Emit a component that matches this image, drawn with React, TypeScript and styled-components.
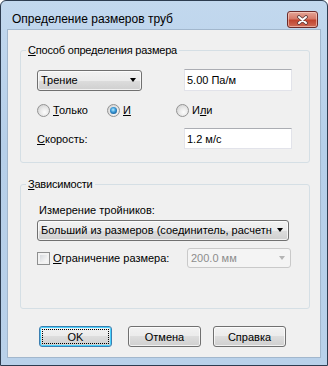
import React from 'react';
import styled, {createGlobalStyle} from 'styled-components';

const GlobalStyle = createGlobalStyle`
  html, body {
    margin: 0;
    padding: 0;
    background: #ffffff;
  }
  body {
    font-family: "Liberation Sans", Arial, sans-serif;
    font-size: 11px;
    color: #000;
  }
`;

const StyledWindow = styled.div`
  box-sizing: border-box;
  width: 328px;
  height: 366px;
  border: 1px solid #2d3c50;
  border-radius: 6px 6px 0 0;
  background: linear-gradient(#c2d8ee, #b6cfe9 40%, #b9d1ea);
  padding: 0 6px 7px;
  display: flex;
  flex-direction: column;
`;

const StyledTitleBar = styled.div`
  height: 28px;
  display: flex;
  align-items: flex-end;
  justify-content: space-between;
  padding: 0 3px 1px 5px;
  box-sizing: border-box;
`;

const StyledTitle = styled.span`
  font-family: "Liberation Sans", Arial, sans-serif;
  font-size: 12px;
  line-height: 18px;
  color: #000;
`;

const StyledClose = styled.div`
  box-sizing: border-box;
  width: 31px;
  height: 17px;
  border: 1px solid #6b2b2b;
  border-radius: 3px;
  background: linear-gradient(#e4a597 0%, #d67a69 45%, #c0442f 55%, #cf6b57 100%);
  box-shadow: inset 0 0 0 1px rgba(255, 220, 210, 0.55);
  display: flex;
  align-items: center;
  justify-content: center;
`;

const StyledClient = styled.div`
  flex: 1;
  background: #f0f0f0;
  border: 1px solid #a2b7cd;
  display: flex;
  flex-direction: column;
`;

const StyledGroup = styled.fieldset<{$top: number; $bottom: number}>`
  box-sizing: border-box;
  margin: ${p => p.$top}px 10px 0 12px;
  padding: 12px 17px ${p => p.$bottom}px 16px;
  border: 1px solid #d5dfe5;
  border-radius: 3px;
  min-width: 0;
`;

const StyledLegend = styled.legend`
  padding: 0 2px;
  margin-left: -11px;
  line-height: 14px;
  font-size: 11px;
  letter-spacing: -0.2px;
`;

const StyledKey = styled.span`
  text-decoration: underline;
  text-underline-offset: 1px;
`;

const StyledRow = styled.div<{$gap?: number; $height: number}>`
  display: flex;
  align-items: center;
  justify-content: space-between;
  height: ${p => p.$height}px;
  margin-top: ${p => p.$gap || 0}px;
`;

const StyledText = styled.span<{$disabled?: boolean}>`
  line-height: 14px;
  white-space: nowrap;
  color: ${p => (p.$disabled ? '#8d8d8d' : '#000')};
`;

const StyledLabelLine = styled.div`
  line-height: 14px;
  height: 14px;
  padding-left: 2px;
`;

const StyledField = styled.div<{$height: number}>`
  box-sizing: border-box;
  width: 108px;
  height: ${p => p.$height}px;
  background: #fff;
  border: 1px solid #e2e3ea;
  border-top-color: #abadb3;
  padding: 0 2px;
  display: flex;
  align-items: center;
`;

const StyledCombo = styled.div<{$width: number; $disabled?: boolean}>`
  box-sizing: border-box;
  width: ${p => p.$width}px;
  height: ${p => (p.$disabled ? 20 : 21)}px;
  border: 1px solid ${p => (p.$disabled ? '#c9c9c9' : '#707070')};
  border-radius: 3px;
  background: ${p => (p.$disabled
    ? '#f4f4f4'
    : 'linear-gradient(#f2f2f2 0%, #ebebeb 50%, #dddddd 50%, #cfcfcf 100%)')};
  box-shadow: ${p => (p.$disabled ? 'none' : 'inset 0 0 0 1px rgba(255,255,255,0.7)')};
  display: flex;
  align-items: center;
  justify-content: space-between;
  padding: 0 5px 0 3px;
  overflow: hidden;
  gap: 4px;
`;

const StyledArrow = styled.span<{$disabled?: boolean}>`
  flex: none;
  width: 0;
  height: 0;
  border-left: 3.5px solid transparent;
  border-right: 3.5px solid transparent;
  border-top: 4px solid ${p => (p.$disabled ? '#b4b4b4' : '#000')};
`;

const StyledRadioGroup = styled.div`
  display: flex;
  align-items: center;
  height: 16px;
  margin-top: 11px;
`;

const StyledRadio = styled.label<{$width?: number}>`
  display: flex;
  align-items: center;
  gap: 3px;
  width: ${p => (p.$width ? `${p.$width}px` : 'auto')};
`;

const StyledRadioMark = styled.span<{$checked?: boolean}>`
  box-sizing: border-box;
  width: 13px;
  height: 13px;
  border-radius: 50%;
  border: 1px solid #939393;
  background: radial-gradient(circle at 60% 65%, #fdfdfd 0%, #e8e8e8 45%, #c9c9c9 100%);
  display: flex;
  align-items: center;
  justify-content: center;
  &::after {
    content: '';
    display: ${p => (p.$checked ? 'block' : 'none')};
    width: 7px;
    height: 7px;
    border-radius: 50%;
    background: radial-gradient(circle at 45% 40%, #b6ecff 0%, #3d9bd8 40%, #125a95 80%, #0c3e6a 100%);
  }
`;

const StyledCheckRow = styled.div`
  display: flex;
  align-items: center;
  margin-top: 8px;
  height: 20px;
`;

const StyledCheck = styled.label`
  display: flex;
  align-items: center;
  gap: 3px;
  width: 150px;
`;

const StyledCheckMark = styled.span`
  box-sizing: border-box;
  width: 13px;
  height: 13px;
  border: 1px solid #8e8f8f;
  background: linear-gradient(135deg, #cbcfd5 0%, #f4f4f4 70%, #ffffff 100%);
  box-shadow: inset 0 0 0 2px #f2f2f2;
`;

const StyledButtonRow = styled.div`
  display: flex;
  margin-top: 17px;
  padding-left: 31px;
`;

const StyledButton = styled.button<{$default?: boolean; $offset?: number}>`
  box-sizing: border-box;
  position: relative;
  width: 73px;
  height: 21px;
  margin: 0 0 0 ${p => p.$offset || 0}px;
  padding: 0;
  border: 1px solid ${p => (p.$default ? '#3c7fb1' : '#707070')};
  border-radius: 3px;
  background: linear-gradient(#f2f2f2 0%, #ebebeb 50%, #dddddd 50%, #cfcfcf 100%);
  box-shadow: inset 0 0 0 1px ${p => (p.$default ? '#48d1fd' : 'rgba(255,255,255,0.7)')};
  font-family: "Liberation Sans", Arial, sans-serif;
  font-size: 11px;
  color: #000;
  &::after {
    content: '';
    display: ${p => (p.$default ? 'block' : 'none')};
    position: absolute;
    inset: 2px;
    border: 1px dotted #000;
  }
`;

const CloseGlyph = () => (
    <svg width="13" height="10" viewBox="0 0 13 10">
        <path d="M3 2 L10 8 M10 2 L3 8" stroke="#5c3a3a" strokeWidth="3.6" strokeLinecap="round"/>
        <path d="M3 2 L10 8 M10 2 L3 8" stroke="#ffffff" strokeWidth="2" strokeLinecap="round"/>
    </svg>
);

const App = () => {
    return (
        <>
            <GlobalStyle/>
            <StyledWindow>
                <StyledTitleBar>
                    <StyledTitle>Определение размеров труб</StyledTitle>
                    <StyledClose><CloseGlyph/></StyledClose>
                </StyledTitleBar>
                <StyledClient>
                    <StyledGroup $top={13} $bottom={13}>
                        <StyledLegend><StyledKey>С</StyledKey>пособ определения размера</StyledLegend>
                        <StyledRow $height={22}>
                            <StyledCombo $width={105}>
                                <StyledText>Трение</StyledText>
                                <StyledArrow/>
                            </StyledCombo>
                            <StyledField $height={22}>5.00 Па/м</StyledField>
                        </StyledRow>
                        <StyledRadioGroup>
                            <StyledRadio $width={70}>
                                <StyledRadioMark/>
                                <StyledText><StyledKey>Т</StyledKey>олько</StyledText>
                            </StyledRadio>
                            <StyledRadio $width={69}>
                                <StyledRadioMark $checked/>
                                <StyledText><StyledKey>И</StyledKey></StyledText>
                            </StyledRadio>
                            <StyledRadio>
                                <StyledRadioMark/>
                                <StyledText>И<StyledKey>л</StyledKey>и</StyledText>
                            </StyledRadio>
                        </StyledRadioGroup>
                        <StyledRow $height={21} $gap={10}>
                            <StyledText><StyledKey>С</StyledKey>корость:</StyledText>
                            <StyledField $height={21}>1.2 м/с</StyledField>
                        </StyledRow>
                    </StyledGroup>
                    <StyledGroup $top={14} $bottom={40}>
                        <StyledLegend><StyledKey>З</StyledKey>ависимости</StyledLegend>
                        <StyledLabelLine>Измерение тройников:</StyledLabelLine>
                        <StyledRow $height={20} $gap={3}>
                            <StyledCombo $width={252}>
                                <StyledText>Больший из размеров (соединитель, расчетн</StyledText>
                                <StyledArrow/>
                            </StyledCombo>
                        </StyledRow>
                        <StyledCheckRow>
                            <StyledCheck>
                                <StyledCheckMark/>
                                <StyledText><StyledKey>О</StyledKey>граничение размера:</StyledText>
                            </StyledCheck>
                            <StyledCombo $width={104} $disabled>
                                <StyledText $disabled>200.0 мм</StyledText>
                                <StyledArrow $disabled/>
                            </StyledCombo>
                        </StyledCheckRow>
                    </StyledGroup>
                    <StyledButtonRow>
                        <StyledButton $default>OK</StyledButton>
                        <StyledButton $offset={16}>Отмена</StyledButton>
                        <StyledButton $offset={12}>Справка</StyledButton>
                    </StyledButtonRow>
                </StyledClient>
            </StyledWindow>
        </>
    );
};

export default App;
